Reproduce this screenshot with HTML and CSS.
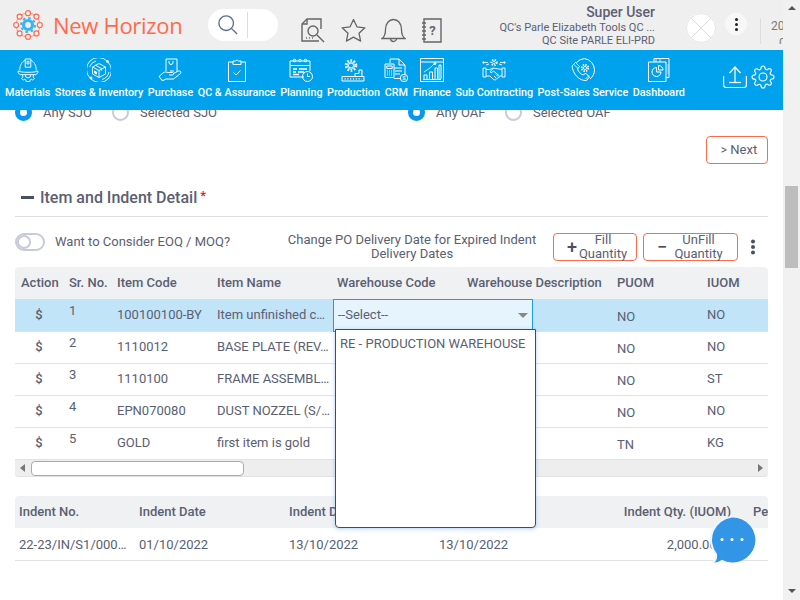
FILE: index.html
```html
<!DOCTYPE html>
<html lang="en">
<head>
    <meta charset="UTF-8">
    <title>New Horizon</title>
    <link rel="stylesheet" href="styles.css">
</head>
<body>
<div class="app">
    <div class="page">
        <header class="topbar">
            <div class="brand">
                <svg class="logo" viewBox="0 0 30 30" fill="none">
                    <circle cx="15" cy="15" r="12" stroke="#ff7a5f" stroke-width=".8"/>
                    <g fill="#f3f3f3" stroke="#ff6a4d" stroke-width="1.2">
                        <circle cx="15" cy="3.2" r="2.5"/><circle cx="23.4" cy="6.6" r="2.5"/><circle cx="26.8" cy="15" r="2.5"/><circle cx="23.4" cy="23.4" r="2.5"/>
                        <circle cx="15" cy="26.8" r="2.5"/><circle cx="6.6" cy="23.4" r="2.5"/><circle cx="3.2" cy="15" r="2.5"/><circle cx="6.6" cy="6.6" r="2.5"/>
                    </g>
                    <circle cx="15" cy="15" r="7" stroke="#3db4f2" stroke-width="2" stroke-dasharray="2.6 2.9"/>
                    <circle cx="15" cy="15" r="4.5" stroke="#3db4f2" stroke-width="3.2"/>
                </svg>
                <span class="brand-name">New Horizon</span>
            </div>
            <div class="search">
                <svg class="search-icon" viewBox="0 0 22 22" fill="none" stroke="#5f6b8f" stroke-width="1.5">
                    <circle cx="9" cy="9" r="8"/><path d="M15 15l6 6"/>
                </svg>
                <span class="search-line"></span>
            </div>
            <div class="tools">
                <svg class="tool" viewBox="0 0 25 25" fill="none" stroke="#666" stroke-width="1.4">
                    <path d="M20 11V1H6L1 6v17h17"/><path d="M6 1v5H1"/><circle cx="12" cy="13" r="5"/><path d="M16 17l7 7"/><path d="M5 20h1M8 20h1M11 20h1"/>
                </svg>
                <svg class="tool" viewBox="0 0 25 25" fill="none" stroke="#666" stroke-width="1.3" stroke-linejoin="round">
                    <path d="M12.5 1.5l3.4 7.3 8 1-5.9 5.4 1.6 7.9-7.1-4-7.1 4 1.6-7.9-5.9-5.4 8-1z"/>
                </svg>
                <svg class="tool" viewBox="0 0 25 25" fill="none" stroke="#666" stroke-width="1.3">
                    <path d="M1 20.5c3-2 3.5-5 3.5-9 0-6 3.5-10 8-10s8 4 8 10c0 4 .5 7 3.5 9z"/><path d="M9.5 20.5a3 3 0 0 0 6 0"/>
                </svg>
                <svg class="tool tool-note" viewBox="0 0 21 25" fill="none" stroke="#666" stroke-width="1.4">
                    <path d="M3 1h17v23H3z"/><path d="M1 5h4M1 9h4M1 13h4M1 17h4M1 21h4"/>
                    <text x="11.5" y="17" class="note-mark">?</text>
                </svg>
            </div>
            <div class="user">
                <div class="user-name">Super User</div>
                <div class="user-line">QC's Parle Elizabeth Tools QC ...</div>
                <div class="user-line">QC Site PARLE ELI-PRD</div>
            </div>
            <svg class="avatar" viewBox="0 0 30 30" fill="none">
                <circle cx="15" cy="15" r="15" fill="#fff"/>
                <path d="M5 5l20 20M25 5L5 25" stroke="#ddd"/>
                <circle cx="15" cy="15" r="14.5" stroke="#e4e4e4"/>
            </svg>
            <div class="dots-btn"><span class="dots"></span></div>
            <div class="clock">
                <div>20</div>
                <div class="clock-low">0</div>
            </div>
        </header>

        <nav class="menu">
            <a class="menu-item">
                <svg viewBox="0 0 24 26" fill="none" stroke="#fff">
                    <path d="M3 13.5C3 7.5 6 3.5 9 2.500M21 13.500c0-6-3-10-6-11"/><path d="M9 1h6v9H9z"/><path d="M11 3.500h2v3h-2z"/>
                    <path d="M1.500 14C3 16 21 16 22.500 14c1 2-1 3.500-2 4H3.500c-1-.5-3-2-2-4z"/>
                    <path d="M6 18.500l.5 2-1.500 1.500 2 2 1.500-1 1 .5.500 2h4l.5-2 1-.5 1.500 1 2-2-1.500-1.500.5-2"/><path d="M9 18.500a3 3 0 0 0 6 0"/>
                </svg>
                <span>Materials</span>
            </a>
            <a class="menu-item">
                <svg viewBox="0 0 24 24" fill="none" stroke="#fff" stroke-width=".9">
                    <path d="M3 20A12 12 0 0 1 20 3M21 4a12 12 0 0 1-17 17"/><circle cx="4" cy="20" r="1" fill="#fff"/><circle cx="20.500" cy="3.500" r="1" fill="#fff"/>
                    <path d="M2.500 9A10 10 0 0 1 9 3M22 14a10 10 0 0 1-7 7.500"/>
                    <path d="M12 5.500l6.500 3.500v7L12 19.500 5.500 16V9zM5.500 9l6.500 3.500L18.500 9M12 12.500v7"/><path d="M8 7l6.500 3.500v2"/><path d="M7.500 13l2 1v2l-2-1z" fill="#fff"/>
                </svg>
                <span>Stores &amp; Inventory</span>
            </a>
            <a class="menu-item">
                <svg viewBox="0 0 24 24" fill="none" stroke="#fff">
                    <path d="M8 13V1h11v13"/><path d="M11 3v1.500a2 2 0 0 0 4 0V3"/><path d="M12 13h4"/>
                    <path d="M1 18.500l4-3.500c2-1.500 3.500-1 5-.500h4.500c1.500 0 1.500 2.500 0 2.500H11"/><path d="M15.500 15.500l5-2.500c2-.5 3 1 2 2.500l-7 5.500H8l-3 1.500-1-1"/><path d="M1 18.500L4.500 23"/>
                </svg>
                <span>Purchase</span>
            </a>
            <a class="menu-item">
                <svg viewBox="0 0 24 24" fill="none" stroke="#fff">
                    <path d="M8 4H3.500v19.500h17V4H16"/><path d="M8 3h2.500a1.800 1.800 0 0 1 3 0H16v3.500H8z"/><path d="M8.500 14.500l2.500 2.500 4.500-4.500"/>
                </svg>
                <span>QC &amp; Assurance</span>
            </a>
            <a class="menu-item">
                <svg viewBox="0 0 24 24" fill="none" stroke="#fff">
                    <path d="M15 19H1V3h20v10"/><path d="M1 7.500h20"/><circle cx="5.500" cy="2.500" r="1.300"/><circle cx="11" cy="2.500" r="1.300"/><circle cx="16.500" cy="2.500" r="1.300"/>
                    <path d="M4 11h4M10 11h8M4 14h3M9 14h6M4 16.500h6" stroke-width="1.300"/><circle cx="18.500" cy="18.500" r="5"/><path d="M18.500 15.500v3h2.500"/>
                </svg>
                <span>Planning</span>
            </a>
            <a class="menu-item">
                <svg viewBox="0 0 24 24" fill="none" stroke="#fff">
                    <circle cx="10" cy="7.500" r="5" stroke-width="2.600" stroke-dasharray="1.600 1.600"/><circle cx="10" cy="7.500" r="2.500"/><circle cx="10" cy="7.500" r="3.700" stroke-width=".7"/>
                    <path d="M14 15.500h4v-3.500h3v3.500h-1M14 15.500v3M21 15.500v3"/><path d="M1 18.500h22v4.500H1z"/><path d="M3.500 20.800h17" stroke-width="1.200" stroke-dasharray="1.200 1.600"/>
                </svg>
                <span>Production</span>
            </a>
            <a class="menu-item">
                <svg viewBox="0 0 24 24" fill="none" stroke="#fff">
                    <path d="M6 5V1h9l6 6v9"/><path d="M15 1v6h6"/><path d="M10 10h8M11 13h7M11 16h5" stroke-width="1.100"/>
                    <path d="M1 6h9v13.500H1z"/><path d="M2.800 8h5.400v2.500H2.800zM3 13h1M5 13h1M7 13h1M3 15h1M5 15h1M7 15h1M3 17h1M5 17h1M7 17h1"/>
                    <path d="M10 20.500h7"/><circle cx="20" cy="20" r="3.700"/><text x="20" y="22.300" class="dollar-mark">$</text>
                </svg>
                <span>CRM</span>
            </a>
            <a class="menu-item">
                <svg viewBox="0 0 24 24" fill="none" stroke="#fff">
                    <path d="M.5.500h23v23H.5zM.5 4h23"/><path d="M3 21.500h18"/><path d="M4 21v-4h3v4M9.500 21v-7h3v7M15 21V10h2.500v11M19 21V7h2v14"/><path d="M4 14l6-4 5-5" stroke-width=".8"/><circle cx="15" cy="5.500" r="1" fill="#fff"/>
                </svg>
                <span>Finance</span>
            </a>
            <a class="menu-item">
                <svg viewBox="0 0 24 24" fill="none" stroke="#fff" stroke-width=".9">
                    <circle cx="12" cy="4.500" r="2.700" stroke-width="1.800" stroke-dasharray="1.300 1.300"/><circle cx="12" cy="4.500" r="1.300" stroke-width=".7"/>
                    <path d="M1 4.500h5M18 4.500h5M4 7l3-1M20 7l-3-1"/><circle cx="1.500" cy="4.500" r=".8"/><circle cx="22.500" cy="4.500" r=".8"/>
                    <path d="M1 10h3v9H1zM20 10h3v9h-3zM4 11.500h4l3-1.500 3 .5 6 1M4 18l4 0 3.500 3.500c1.500 1 2.500 0 3-.5l5.500-4"/><path d="M11 10.500l-3 3.500c1 1 2.500.5 3.500-1l6 5M12 18l2 2M14 16.500l2 2"/>
                </svg>
                <span>Sub Contracting</span>
            </a>
            <a class="menu-item">
                <svg viewBox="0 0 24 24" fill="none" stroke="#fff">
                    <path d="M5.500 4.500A11.500 11.500 0 0 1 13.500.600 11.500 11.500 0 0 1 23.500 12c0 4-2 7-4.500 9"/>
                    <path d="M1 8l3.500-3.500 4 4-2 2.500c1 3 3 5 6 6l2-2 4 4-3 3.500C8 23 2 16 1 8z"/><path d="M3 6.500l4 4M14.500 21l3.500-3.500" stroke-width=".8"/>
                    <circle cx="14" cy="10" r="3.200" stroke-width="1.800" stroke-dasharray="1.400 1.100"/><circle cx="14" cy="10" r="1.600"/>
                </svg>
                <span>Post-Sales Service</span>
            </a>
            <a class="menu-item">
                <svg viewBox="0 0 24 24" fill="none" stroke="#fff">
                    <path d="M7 4V.500h15v19h-3"/><path d="M9 1v3M13 1v3" stroke-width=".8"/><path d="M1.500 4h17.500v19.500H1.500z"/><path d="M21 6v10" stroke-width=".7" opacity=".7"/>
                    <path d="M9.500 9.500a4.500 4.500 0 1 0 4.500 4.500H9.500z"/><path d="M11.500 7.500a4.500 4.500 0 0 1 4.500 4.500h-4.500z"/>
                </svg>
                <span>Dashboard</span>
            </a>
            <div class="menu-end">
                <svg class="menu-upload" viewBox="0 0 24 22" fill="none" stroke="#fff" stroke-width="1.200">
                    <path d="M.6 10v9a2.500 2.500 0 0 0 2.500 2.500h17.800a2.500 2.500 0 0 0 2.500-2.500v-9"/><path d="M12 16V1M6.500 7L12 1l5.500 6"/><path d="M6 16.500h12"/>
                </svg>
                <svg class="menu-gear" viewBox="0 0 24 24" fill="none" stroke="#fff" stroke-width="1.100">
                    <circle cx="12" cy="12" r="4"/>
                    <path d="M19.400 15a1.650 1.650 0 0 0 .33 1.820l.06.06a2 2 0 0 1 0 2.830 2 2 0 0 1-2.830 0l-.06-.06a1.650 1.650 0 0 0-1.820-.33 1.650 1.650 0 0 0-1 1.510V21a2 2 0 0 1-2 2 2 2 0 0 1-2-2v-.09A1.650 1.650 0 0 0 9 19.400a1.650 1.650 0 0 0-1.820.33l-.06.06a2 2 0 0 1-2.830 0 2 2 0 0 1 0-2.830l.06-.06a1.650 1.650 0 0 0 .33-1.820 1.650 1.650 0 0 0-1.510-1H3a2 2 0 0 1-2-2 2 2 0 0 1 2-2h.09A1.650 1.650 0 0 0 4.600 9a1.650 1.650 0 0 0-.33-1.820l-.06-.06a2 2 0 0 1 0-2.830 2 2 0 0 1 2.830 0l.06.06a1.650 1.650 0 0 0 1.820.33H9a1.650 1.650 0 0 0 1-1.510V3a2 2 0 0 1 2-2 2 2 0 0 1 2 2v.09a1.650 1.650 0 0 0 1 1.510 1.650 1.650 0 0 0 1.820-.33l.06-.06a2 2 0 0 1 2.830 0 2 2 0 0 1 0 2.830l-.06.06a1.650 1.650 0 0 0-.33 1.820V9a1.650 1.650 0 0 0 1.510 1H21a2 2 0 0 1 2 2 2 2 0 0 1-2 2h-.09a1.650 1.650 0 0 0-1.510 1z"/>
                </svg>
            </div>
        </nav>

        <main class="content">
            <div class="radio-row">
                <label class="radio-group">
                    <span class="radio radio-on"></span><span class="radio-text">Any SJO</span>
                    <span class="radio"></span><span class="radio-text">Selected SJO</span>
                </label>
                <label class="radio-group">
                    <span class="radio radio-on"></span><span class="radio-text">Any OAF</span>
                    <span class="radio"></span><span class="radio-text">Selected OAF</span>
                </label>
            </div>

            <div class="next-row">
                <button class="btn btn-next"><span class="next-mark">&gt;</span> Next</button>
            </div>

            <h2 class="section-title"><span class="section-dash"></span>Item and Indent Detail<span class="required">*</span></h2>

            <div class="toolbar">
                <span class="toggle"><span class="toggle-knob"></span></span>
                <span class="toggle-label">Want to Consider EOQ / MOQ?</span>
                <span class="change-note">Change PO Delivery Date for Expired Indent Delivery Dates</span>
                <button class="btn btn-fill"><span class="btn-sign">+</span><span class="btn-text">Fill Quantity</span></button>
                <button class="btn btn-unfill"><span class="btn-sign btn-minus">−</span><span class="btn-text">UnFill Quantity</span></button>
                <span class="kebab"><span class="dots"></span></span>
            </div>

            <div class="grid-wrap">
                <table class="grid grid-items">
                    <colgroup>
                        <col class="c-action"><col class="c-sr"><col class="c-code"><col class="c-name"><col class="c-wh"><col class="c-desc"><col class="c-puom"><col class="c-iuom">
                    </colgroup>
                    <thead>
                        <tr><th>Action</th><th>Sr. No.</th><th>Item Code</th><th>Item Name</th><th>Warehouse Code</th><th>Warehouse Description</th><th>PUOM</th><th>IUOM</th></tr>
                    </thead>
                    <tbody>
                        <tr class="row-active">
                            <td class="cell-action">$</td><td class="cell-sr">1</td><td>100100100-BY</td><td>Item unfinished c…</td><td></td><td></td><td class="cell-puom">NO</td><td>NO</td>
                        </tr>
                        <tr><td class="cell-action">$</td><td class="cell-sr">2</td><td>1110012</td><td>BASE PLATE (REV…</td><td></td><td></td><td class="cell-puom">NO</td><td>NO</td></tr>
                        <tr><td class="cell-action">$</td><td class="cell-sr">3</td><td>1110100</td><td>FRAME ASSEMBL…</td><td></td><td></td><td class="cell-puom">NO</td><td>ST</td></tr>
                        <tr><td class="cell-action">$</td><td class="cell-sr">4</td><td>EPN070080</td><td>DUST NOZZEL (S/…</td><td></td><td></td><td class="cell-puom">NO</td><td>NO</td></tr>
                        <tr><td class="cell-action">$</td><td class="cell-sr">5</td><td>GOLD</td><td>first item is gold</td><td></td><td></td><td class="cell-puom">TN</td><td>KG</td></tr>
                    </tbody>
                </table>
                <div class="hscroll">
                    <span class="hscroll-arrow hscroll-left"></span>
                    <span class="hscroll-thumb"></span>
                    <span class="hscroll-arrow hscroll-right"></span>
                </div>

                <div class="select-box">--Select--<span class="select-caret"></span></div>
                <div class="select-list">RE - PRODUCTION WAREHOUSE</div>
            </div>

            <table class="grid grid-indent">
                <colgroup>
                    <col class="i-no"><col class="i-date"><col class="i-due"><col class="i-extra"><col class="i-qty"><col class="i-pe">
                </colgroup>
                <thead>
                    <tr><th>Indent No.</th><th>Indent Date</th><th>Indent Delivery Date</th><th></th><th class="num">Indent Qty. (IUOM)</th><th>Pending</th></tr>
                </thead>
                <tbody>
                    <tr><td>22-23/IN/S1/000…</td><td>01/10/2022</td><td>13/10/2022</td><td>13/10/2022</td><td class="num">2,000.000</td><td></td></tr>
                </tbody>
            </table>

            <div class="chat">
                <svg viewBox="0 0 50 50">
                    <path d="M25 1a23.500 23.500 0 1 1-10 44.800c-3 1.700-7 2.700-11 2.500 2.500-2.500 4-5 4.500-8.500A23.500 23.500 0 0 1 25 1z" fill="#eef6fc"/>
                    <path d="M25 2.500a22.500 22.500 0 1 1-10 42.200c-2.500 1.700-4.500 2.500-7.500 2.800 1.800-2 3-4 2.500-8.500A22.500 22.500 0 0 1 25 2.500z" fill="#3295e6"/>
                    <circle cx="15" cy="24.500" r="1.500" fill="#fff"/><circle cx="25" cy="24.500" r="1.500" fill="#fff"/><circle cx="35" cy="24.500" r="1.500" fill="#fff"/>
                </svg>
            </div>
        </main>
    </div>

    <div class="vscroll">
        <span class="vscroll-up"></span>
        <span class="vscroll-thumb"></span>
        <span class="vscroll-down"></span>
    </div>
</div>
</body>
</html>
```

FILE: styles.css
```css
* {
    box-sizing: border-box;
}
html, body {
    margin: 0;
    padding: 0;
    height: 100%;
    overflow: hidden;
}
body {
    font-family: Roboto, "Liberation Sans", sans-serif;
    font-size: 13px;
    color: #5a6072;
    background: #fff;
}
.app {
    display: flex;
    width: 800px;
    height: 600px;
}
.page {
    width: 783px;
    height: 600px;
    display: flex;
    flex-direction: column;
    overflow: hidden;
}

/* top bar */
.topbar {
    height: 50px;
    flex: none;
    background: #efefef;
    display: flex;
    align-items: flex-start;
    overflow: hidden;
}
.brand {
    display: flex;
    align-items: center;
    width: 208px;
    height: 50px;
    padding-left: 13px;
}
.logo {
    width: 30px;
    height: 30px;
}
.brand-name {
    margin-left: 10px;
    font-family: "Open Sans", sans-serif;
    font-size: 22px;
    letter-spacing: -0.3px;
    color: #ff6a4d;
    white-space: nowrap;
}
.search {
    width: 70px;
    height: 32px;
    margin-top: 9px;
    background: #fff;
    border-radius: 16px;
    display: flex;
    align-items: center;
    padding-left: 10px;
}
.search-icon {
    width: 20px;
    height: 20px;
}
.search-line {
    width: 1px;
    height: 26px;
    margin-left: 9px;
    background: #ddd;
}
.tools {
    display: flex;
    width: 164px;
    margin: 18px 0 0 23px;
    gap: 15px;
}
.tool {
    width: 25px;
    height: 25px;
    flex: none;
}
.tool-note {
    width: 21px;
}
.note-mark {
    font-size: 13px;
    font-weight: 700;
    fill: #666;
    stroke: none;
    text-anchor: middle;
}
.user {
    width: 190px;
    margin: 4px 0 0 0;
    text-align: right;
    white-space: nowrap;
    flex: none;
}
.user-name {
    font-size: 14px;
    font-weight: 500;
    line-height: 17px;
}
.user-line {
    font-size: 11px;
    line-height: 13px;
}
.avatar {
    width: 30px;
    height: 30px;
    margin: 13px 0 0 31px;
    flex: none;
}
.dots-btn {
    width: 22px;
    height: 22px;
    margin: 13px 0 0 9px;
    border-radius: 50%;
    background: #f7f7f7;
    display: flex;
    align-items: center;
    justify-content: center;
    flex: none;
}
.dots {
    display: block;
    width: 3px;
    height: 3px;
    border-radius: 50%;
    background: #222;
    box-shadow: 0 -5px 0 #222, 0 5px 0 #222;
}
.clock {
    width: 23px;
    height: 26px;
    margin: 18px 0 0 13px;
    padding-left: 10px;
    border-left: 1px solid #ddd;
    font-size: 12px;
    line-height: 17px;
    flex: none;
    white-space: nowrap;
    overflow: hidden;
    color: #777;
}
.clock-low {
    padding-left: 8px;
}

/* blue menu */
.menu {
    height: 60px;
    flex: none;
    background: #00a2ee;
    display: flex;
    padding: 0 8px 0 5px;
    gap: 4.500px;
    position: relative;
    z-index: 2;
}
.menu-item {
    display: flex;
    flex-direction: column;
    align-items: center;
    padding-top: 8px;
    color: #fff;
    font-size: 10.800px;
    font-weight: 500;
    white-space: nowrap;
}
.menu-item svg {
    width: 24px;
    height: 24px;
    flex: none;
}
.menu-item span {
    margin-top: 4px;
    line-height: 14px;
}
.menu-end {
    display: flex;
    margin-left: auto;
    gap: 4px;
    padding-top: 15px;
}
.menu-upload {
    width: 24px;
    height: 22px;
    margin-top: 1px;
}
.menu-gear {
    width: 24px;
    height: 24px;
}

/* content */
.content {
    flex: 1;
    position: relative;
    padding: 0 15px;
    overflow: hidden;
}
.radio-row {
    display: flex;
    height: 26px;
    margin-top: -11px;
    align-items: center;
}
.radio-group {
    display: flex;
    align-items: center;
    flex: none;
    width: 360px;
}
.radio-group:first-child {
    width: 393px;
}
.radio {
    width: 17px;
    height: 17px;
    border: 2px solid #c9ccd6;
    border-radius: 50%;
    flex: none;
    background: #fff;
}
.radio-on {
    border: 5px solid #0a97ee;
}
.radio-text {
    margin-left: 11px;
    width: 58px;
    margin-right: 11px;
    white-space: nowrap;
    font-size: 13px;
}
.next-row {
    display: flex;
    justify-content: flex-end;
    margin-top: 11px;
}
.btn {
    font-family: inherit;
    color: #5a6072;
    background: #fff;
    border: 1px solid #ff6a4d;
    border-radius: 4px;
    padding: 0;
}
.btn-next {
    width: 62px;
    height: 28px;
    font-size: 13px;
    padding: 0 0 2px 4px;
}
.next-mark {
    font-size: 12px;
}
.section-title {
    display: flex;
    align-items: center;
    height: 40px;
    margin: 13px 0 0;
    padding: 1px 0 0 6px;
    border-bottom: 1px solid #dedede;
    font-size: 16px;
    font-weight: 500;
}
.section-dash {
    width: 13px;
    height: 3px;
    margin-right: 6px;
    background: #4a5064;
}
.required {
    margin: -4px 0 0 3px;
    color: #e8112d;
    font-size: 13px;
}
.toolbar {
    display: flex;
    align-items: center;
    height: 28px;
    margin-top: 16px;
}
.toggle {
    width: 30px;
    height: 18px;
    border: 2px solid #c8cbd6;
    border-radius: 9px;
    flex: none;
    display: block;
    align-self: flex-start;
}
.toggle-knob {
    display: block;
    width: 14px;
    height: 14px;
    border-radius: 50%;
    background: #fff;
    border: 2px solid #c8cbd6;
}
.toggle-label {
    margin-left: 10px;
    width: 230px;
    flex: none;
    line-height: 18px;
    white-space: nowrap;
    align-self: flex-start;
}
.change-note {
    width: 254px;
    flex: none;
    text-align: center;
    line-height: 14px;
}
.btn-fill, .btn-unfill {
    height: 28px;
    display: flex;
    align-items: center;
    font-size: 13px;
    line-height: 14px;
    flex: none;
}
.btn-fill {
    width: 84px;
    margin-left: 14px;
    padding: 0 8px 0 12px;
}
.btn-unfill {
    width: 95px;
    margin-left: 6px;
    padding: 0 8px 0 12px;
}
.btn-sign {
    font-size: 18px;
    font-weight: 500;
    color: #4a5064;
    flex: none;
    width: 12px;
}
.btn-text {
    flex: 1;
    text-align: center;
}
.kebab {
    margin-left: 13px;
    display: block;
}
.kebab .dots {
    width: 4px;
    height: 4px;
    background: #4a5064;
    box-shadow: 0 -5.500px 0 #4a5064, 0 5.500px 0 #4a5064;
}

/* tables */
.grid-wrap {
    position: relative;
    margin-top: 6px;
}
.grid {
    width: 753px;
    border-collapse: separate;
    border-spacing: 0;
    table-layout: fixed;
    font-size: 13px;
}
.grid th {
    height: 32px;
    padding: 0 6px 2px;
    background: #f0f1f3;
    text-align: left;
    font-weight: 500;
    white-space: nowrap;
    overflow: hidden;
}
.grid td {
    height: 32px;
    padding: 0 6px;
    white-space: nowrap;
    overflow: hidden;
}
.grid-items td {
    padding-bottom: 1px;
}
.grid-items tbody tr + tr td {
    border-top: 1px solid #e2e2e2;
    padding-bottom: 2px;
}
.grid-indent td {
    height: 33px;
    border-bottom: 1px solid #e2e2e2;
}
.grid th:first-child {
    border-top-left-radius: 4px;
}
.grid th:last-child {
    border-top-right-radius: 4px;
}
.c-action { width: 48px; }
.c-sr { width: 48px; }
.c-code { width: 100px; }
.c-name { width: 120px; }
.c-wh { width: 130px; }
.c-desc { width: 150px; }
.c-puom { width: 90px; }
.c-iuom { width: 67px; }
.row-active td {
    background: #c2e4f8;
}
.cell-action {
    text-align: center;
    font-weight: 500;
}
.grid-items tbody td.cell-sr, .grid-items tbody tr + tr td.cell-sr {
    padding-bottom: 10px;
}
.grid-items tbody td.cell-puom, .grid-items tbody tr + tr td.cell-puom {
    padding: 2px 6px 0;
}
.hscroll {
    height: 18px;
    background: #eee;
    border-top: 1px solid #e2e2e2;
    border-bottom: 1px solid #e2e2e2;
    border-radius: 0 0 4px 4px;
    display: flex;
    align-items: center;
    padding: 0 5px;
}
.hscroll-arrow {
    width: 0;
    height: 0;
    border-top: 4px solid transparent;
    border-bottom: 4px solid transparent;
    flex: none;
}
.hscroll-left {
    border-right: 5px solid #777;
}
.hscroll-right {
    border-left: 5px solid #777;
    margin-left: auto;
}
.hscroll-thumb {
    width: 213px;
    height: 15px;
    margin-left: 6px;
    background: #fff;
    border: 1px solid #aaa;
    border-radius: 4px;
}
.select-box {
    position: absolute;
    left: 318px;
    top: 32px;
    width: 200px;
    height: 33px;
    padding: 0 4px;
    line-height: 30px;
    background: #e6f4fd;
    border: 1px solid #1a9ce8;
}
.select-caret {
    position: absolute;
    right: 4px;
    top: 13px;
    border-left: 5px solid transparent;
    border-right: 5px solid transparent;
    border-top: 5px solid #888;
}
.select-list {
    position: absolute;
    left: 320px;
    top: 62px;
    width: 201px;
    height: 199px;
    padding: 5px 4px;
    background: #fff;
    border: 1px solid #3f4a63;
    border-radius: 0 0 4px 4px;
    box-shadow: 0 1px 4px rgba(60, 140, 230, 0.4);
    line-height: 17px;
    white-space: nowrap;
    z-index: 3;
}
.grid-indent {
    margin-top: 19px;
}
.i-no { width: 118px; }
.i-date { width: 150px; }
.i-due { width: 150px; }
.i-extra { width: 150px; }
.i-qty { width: 164px; }
.i-pe { width: 21px; }
.grid-indent th:first-child, .grid-indent td:first-child {
    padding-left: 4px;
    padding-right: 0;
}
.grid-indent th.num {
    text-align: right;
    padding-right: 16px;
}
.grid-indent td.num {
    text-align: right;
    padding-right: 23px;
}
.chat {
    position: absolute;
    left: 707px;
    top: 405px;
    width: 50px;
    height: 50px;
    z-index: 4;
}
.chat svg {
    display: block;
    width: 50px;
    height: 50px;
}

/* page scrollbar */
.vscroll {
    width: 17px;
    height: 600px;
    flex: none;
    background: #f1f1f1;
    position: relative;
}
.vscroll-thumb {
    position: absolute;
    left: 2px;
    top: 186px;
    width: 13px;
    height: 82px;
    background: #bdbdbd;
}
.vscroll-up, .vscroll-down {
    position: absolute;
    left: 5px;
    border-left: 4px solid transparent;
    border-right: 4px solid transparent;
}
.vscroll-up {
    top: 6px;
    border-bottom: 4px solid #555;
}
.vscroll-down {
    bottom: 7px;
    border-top: 4px solid #555;
}
.dollar-mark {
    font-size: 6px;
    fill: #fff;
    stroke: none;
    text-anchor: middle;
}
```
